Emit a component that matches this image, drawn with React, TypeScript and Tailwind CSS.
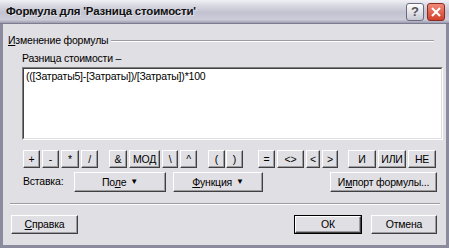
import React from "react";

const btn =
  "flex items-center justify-center bg-[#e0dfe3] border border-t-white border-l-white border-r-[#404040] border-b-[#404040] shadow-[inset_-1px_-1px_0_#9d9da1] text-[10.5px] tracking-[-0.2px] text-black leading-none";

function OpBtn({ label, w }: { label: string; w: string }) {
  return <div className={`${btn} ${w} h-[18px]`}>{label}</div>;
}

export default function App() {
  return (
    <div
      className="w-[449px] h-[248px] bg-[#e0dfe3] flex flex-col overflow-hidden"
      style={{ fontFamily: '"Liberation Sans", "DejaVu Sans", sans-serif' }}
    >
      {/* title bar */}
      <div className="h-[24px] shrink-0 flex items-center pl-[6px] pr-[4px] bg-[linear-gradient(to_bottom,#f0f0f5_0%,#dcdce5_20%,#c2c2d0_55%,#cdcdda_85%,#9d9db0_100%)] border-b border-[#7c7c90]">
        <div className="text-[11.5px] font-bold text-[#111] tracking-[-0.2px] [text-shadow:1px_1px_0_#ffffff80]">
          Формула для 'Разница стоимости'
        </div>
        <div className="ml-auto flex gap-[3px]">
          <div className="w-[18px] h-[18px] rounded-[3px] border border-[#6b6b80] bg-[linear-gradient(to_bottom,#ffffff,#c8c8d4)] flex items-center justify-center text-[13px] font-bold text-[#555]">
            ?
          </div>
          <div className="w-[18px] h-[18px] rounded-[3px] border border-[#8a2a20] bg-[linear-gradient(to_bottom,#f08a78,#d2402c)] flex items-center justify-center">
            <svg width="12" height="12" viewBox="0 0 12 12">
              <path d="M2 2 L10 10 M10 2 L2 10" stroke="#fff" strokeWidth="2" />
            </svg>
          </div>
        </div>
      </div>

      {/* body */}
      <div className="flex-1 flex flex-col border-l-[3px] border-r-[3px] border-b-[3px] border-[#8b8b9e] text-[10.5px] tracking-[-0.2px] text-black">
        {/* group header */}
        <div className="flex items-center mt-[9px] pl-[5px] pr-[12px]">
          <span>
            <u>И</u>зменение формулы
          </span>
          <div className="flex-1 ml-[3px] border-t border-t-[#9d9da1] border-b border-b-white h-[2px]" />
        </div>

        <div className="pl-[19px] pr-[3px] mt-[3px]">
          <div className="h-[12px] leading-[12px]">Разница стоимости –</div>
          <div className="mt-[3px] h-[73px] bg-white border border-t-[#808080] border-l-[#808080] border-r-white border-b-white">
            <div className="h-full border border-t-[#404040] border-l-[#404040] border-r-[#e0dfe3] border-b-[#e0dfe3] px-[2px] pt-[1px] text-[10.5px] leading-[13px]">
              (([Затраты5]-[Затраты])/[Затраты])*100
            </div>
          </div>
        </div>

        {/* operator buttons */}
        <div className="flex items-center mt-[10px] pl-[20px]">
          <div className="flex gap-[2px]">
            <OpBtn label="+" w="w-[17px]" />
            <OpBtn label="-" w="w-[17px]" />
            <OpBtn label="*" w="w-[18px]" />
            <OpBtn label="/" w="w-[17px]" />
          </div>
          <div className="flex gap-[2px] ml-[11px]">
            <OpBtn label="&" w="w-[18px]" />
            <OpBtn label="МОД" w="w-[31px]" />
            <OpBtn label="\" w="w-[16px]" />
            <OpBtn label="^" w="w-[17px]" />
          </div>
          <div className="flex gap-[1px] ml-[11px]">
            <OpBtn label="(" w="w-[17px]" />
            <OpBtn label=")" w="w-[17px]" />
          </div>
          <div className="flex gap-[2px] ml-[15px]">
            <OpBtn label="=" w="w-[17px]" />
            <OpBtn label="<>" w="w-[27px]" />
            <OpBtn label="<" w="w-[14px]" />
            <OpBtn label=">" w="w-[16px]" />
          </div>
          <div className="flex gap-[2px] ml-[10px]">
            <OpBtn label="И" w="w-[28px]" />
            <OpBtn label="ИЛИ" w="w-[28px]" />
            <OpBtn label="НЕ" w="w-[28px]" />
          </div>
        </div>

        {/* insert row */}
        <div className="flex items-center mt-[4px] pl-[20px] pr-[9px]">
          <span className="w-[51px]">Вставка:</span>
          <div className={`${btn} w-[92px] h-[20px] gap-[4px]`}>
            <span>
              По<u>л</u>е
            </span>
            <span className="text-[8px]">▼</span>
          </div>
          <div className={`${btn} w-[90px] h-[20px] gap-[4px] ml-[7px]`}>
            <span>
              <u>Ф</u>ункция
            </span>
            <span className="text-[8px]">▼</span>
          </div>
          <div className={`${btn} w-[107px] h-[20px] ml-auto`}>
            <span>
              И<u>м</u>порт формулы...
            </span>
          </div>
        </div>

        {/* separator */}
        <div className="mt-[11px] ml-[7px] mr-[6px] border-t border-t-[#9d9da1] border-b border-b-white h-[2px]" />

        {/* bottom buttons */}
        <div className="flex items-center mt-[10px] pl-[8px] pr-[9px]">
          <div className={`${btn} w-[67px] h-[19px]`}>
            <span>
              <u>С</u>правка
            </span>
          </div>
          <div className="ml-auto border border-black">
            <div className={`${btn} w-[66px] h-[17px]`}>ОК</div>
          </div>
          <div className={`${btn} w-[66px] h-[19px] ml-[9px]`}>Отмена</div>
        </div>
      </div>
    </div>
  );
}
